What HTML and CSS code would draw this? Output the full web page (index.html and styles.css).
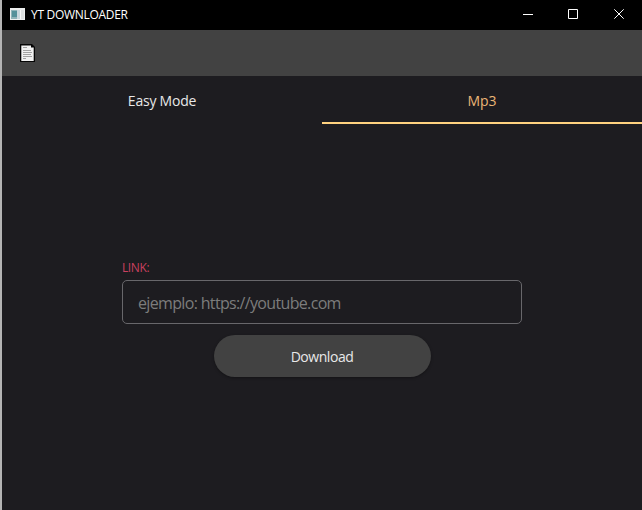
FILE: index.html
```html
<!DOCTYPE html>
<html lang="es">
<head>
<meta charset="utf-8">
<title>YT DOWNLOADER</title>
<link rel="stylesheet" href="styles.css">
</head>
<body>
<div class="window">
  <header class="titlebar">
    <svg class="app-icon" width="15" height="12" viewBox="0 0 15 12" shape-rendering="crispEdges">
      <rect width="15" height="12" fill="#eceeee"/>
      <rect x="1" y="2" width="8" height="9" fill="#8fb3b8"/>
      <rect x="2" y="3" width="5" height="6" fill="#55919a"/>
      <rect x="7" y="2" width="3" height="9" fill="#c9d6dc"/>
      <rect x="10" y="2" width="1" height="9" fill="#f7f7f7"/>
      <rect x="11" y="2" width="3" height="9" fill="#dcdfdf"/>
    </svg>
    <h1 class="title">YT DOWNLOADER</h1>
    <div class="controls">
      <button class="control minimize" aria-label="Minimizar"><svg width="10" height="10"><path d="M0 5.5H10"/></svg></button>
      <button class="control" aria-label="Maximizar"><svg width="10" height="10"><path d="M.5 .5H9.5V9.5H.5Z"/></svg></button>
      <button class="control" aria-label="Cerrar"><svg width="10" height="10"><path d="M.3 .3L9.7 9.7M9.7 .3L.3 9.7"/></svg></button>
    </div>
  </header>
  <div class="toolbar">
    <svg width="15" height="18" viewBox="0 0 15 18">
      <path d="M0 0H12L15 3V18H0Z" fill="#050505"/>
      <path d="M1.3 1.5H11V3.5H13.7V17H1.3Z" fill="#f1f1f1"/>
      <path d="M3 3.5H7M3 6.5H11M3 8.5H12M3 10.5H11M3 12.5H12M3 14.5H6" stroke="#a2a2a2" fill="none"/>
    </svg>
  </div>
  <nav class="tabs">
    <button class="tab">Easy Mode</button>
    <button class="tab active">Mp3</button>
  </nav>
  <main class="form">
    <label class="label" for="link">LINK:</label>
    <input class="link" id="link" type="text" placeholder="ejemplo: https://youtube.com">
    <button class="download">Download</button>
  </main>
</div>
</body>
</html>
```
FILE: styles.css
```css
* {
  box-sizing: border-box;
}

body {
  margin: 0;
  background: #1d1c20;
  font-family: "Open Sans", "Noto Sans", sans-serif;
  color: #e8e8e8;
}

button {
  margin: 0;
  padding: 0;
  border: 0;
  background: none;
  color: inherit;
  font: inherit;
}

.window {
  height: 510px;
  border-left: 2px solid #3a3a3c;
  border-image: linear-gradient(to right, #b4b4b4 50%, #67676a 50%) 0 0 0 2;
  display: flex;
  flex-direction: column;
  overflow: hidden;
}

.titlebar {
  height: 30px;
  flex: none;
  display: flex;
  align-items: center;
  padding-left: 8px;
  background: #000;
}

.app-icon {
  margin-top: -2px;
}

.title {
  margin: 0 0 0 6px;
  font-size: 12px;
  line-height: 16px;
  font-weight: 400;
  letter-spacing: -0.3px;
  color: #fff;
  white-space: nowrap;
}

.controls {
  display: flex;
  align-self: flex-start;
  margin-left: auto;
}

.control {
  width: 46px;
  height: 28px;
  display: grid;
  place-items: center;
}

.control.minimize {
  width: 45px;
  padding-left: 1px;
}

.control svg {
  fill: none;
  stroke: #fff;
}

.toolbar {
  height: 46px;
  flex: none;
  padding: 14px 0 0 18px;
  background: #424242;
}

.toolbar svg {
  display: block;
}

.tabs {
  display: grid;
  grid-template-columns: 1fr 1fr;
  height: 48px;
  flex: none;
}

.tab {
  padding-top: 2px;
  border-bottom: 2px solid transparent;
  font-size: 14px;
  letter-spacing: -0.22px;
}

.tab.active {
  color: #eab676;
  border-color: #ffd280;
  letter-spacing: 0;
}

.form {
  width: 400px;
  margin: 136px auto 0;
  display: flex;
  flex-direction: column;
}

.label {
  height: 20px;
  font-size: 12px;
  line-height: 16px;
  letter-spacing: -0.4px;
  color: #c9405f;
}

.link {
  height: 44px;
  padding: 2px 15px 0;
  border: 1px solid #68676b;
  border-radius: 5px;
  background: transparent;
  color: #e6e6e6;
  font-family: inherit;
  font-size: 16px;
  letter-spacing: -0.66px;
}

.link::placeholder {
  color: #7c7c7c;
}

.download {
  align-self: center;
  width: 217px;
  height: 42px;
  margin-top: 11px;
  border-radius: 21px;
  background: #424242;
  box-shadow: 0 1px 3px rgba(0, 0, 0, 0.35);
  font-size: 14px;
  letter-spacing: -0.45px;
}
```
